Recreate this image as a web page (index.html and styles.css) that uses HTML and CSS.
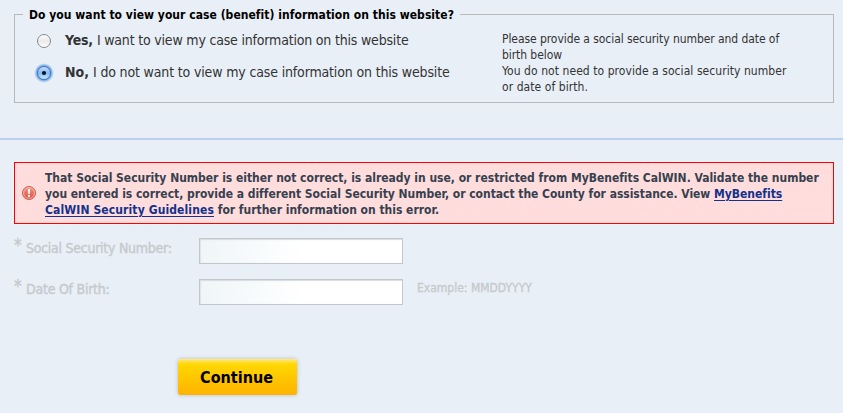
FILE: index.html
```html
<!DOCTYPE html>
<html lang="en">
<head>
<meta charset="utf-8">
<title>MyBenefits CalWIN</title>
<link rel="stylesheet" href="styles.css">
</head>
<body>
<form>
  <fieldset class="choice">
    <legend>Do you want to view your case (benefit) information on this website?</legend>
    <div class="choice-body">
      <div class="options">
        <label class="option">
          <svg class="radio" width="20" height="20" viewBox="0 0 20 20">
            <defs>
              <linearGradient id="plain" x1="0" y1="0" x2="0" y2="1"><stop offset="0" stop-color="#fff"/><stop offset=".5" stop-color="#e9e9e9"/><stop offset="1" stop-color="#fff"/></linearGradient>
            </defs>
            <circle cx="10" cy="10" r="6.5" fill="url(#plain)" stroke="#87898c"/>
          </svg>
          <span class="yes"><b>Yes,</b> <span>I want to view my case information on this website</span></span>
        </label>
        <label class="option">
          <svg class="radio" width="20" height="20" viewBox="0 0 20 20">
            <defs>
              <radialGradient id="halo"><stop offset=".68" stop-color="#4f8fdb" stop-opacity=".9"/><stop offset=".82" stop-color="#71a7e6" stop-opacity=".6"/><stop offset="1" stop-color="#8dbaf0" stop-opacity="0"/></radialGradient>
              <linearGradient id="picked" x1="0" y1="0" x2="0" y2="1"><stop offset="0" stop-color="#cfe2f8"/><stop offset=".5" stop-color="#84b9ef"/><stop offset="1" stop-color="#c9f0ff"/></linearGradient>
            </defs>
            <circle cx="10" cy="10" r="10" fill="url(#halo)"/>
            <circle cx="10" cy="10" r="6.5" fill="url(#picked)" stroke="#4377bd"/>
            <circle cx="10" cy="10" r="2.1" fill="#07142b"/>
          </svg>
          <span class="no"><b>No,</b> <span>I do not want to view my case information on this website</span></span>
        </label>
      </div>
      <div class="hints">
        <p class="hint-a">Please provide a social security number and date of<br>birth below</p>
        <p class="hint-b">You do not need to provide a social security number<br>or date of birth.</p>
      </div>
    </div>
  </fieldset>

  <hr class="divider">

  <div class="alert">
    <svg class="alert-icon" width="14" height="14" viewBox="0 0 14 14">
      <defs><linearGradient id="warn" x1="0" y1="0" x2="0" y2="1"><stop offset="0" stop-color="#f09a88"/><stop offset="1" stop-color="#dc4b3c"/></linearGradient></defs>
      <circle cx="7" cy="7" r="6.5" fill="url(#warn)" stroke="#cf5f52"/>
      <circle cx="7" cy="7" r="5.4" fill="none" stroke="#f7b5a8" stroke-width=".9"/>
      <path d="M5.9 2.9h2.2l-.4 5.1h-1.4z" fill="#fff"/>
      <circle cx="7" cy="10" r="1.15" fill="#fff"/>
    </svg>
    <p>That Social Security Number is either not correct, is already in use, or restricted from MyBenefits CalWIN. Validate the number<br><span class="line-two">you entered is correct, provide a different Social Security Number, or contact the County for assistance. View </span><a href="#">MyBenefits<br><span class="link-tail">CalWIN Security Guidelines</span></a> for further information on this error.</p>
  </div>

  <div class="field">
    <label for="ssn"><sup>*</sup><span class="ssn-label">Social Security Number:</span></label>
    <input id="ssn" type="text">
  </div>
  <div class="field">
    <label for="dob"><sup>*</sup><span class="dob-label">Date Of Birth:</span></label>
    <input id="dob" type="text">
    <span class="example">Example: MMDDYYYY</span>
  </div>

  <button class="continue" type="button">Continue</button>
</form>
</body>
</html>
```

FILE: styles.css
```css
* { box-sizing: border-box; }
body {
  margin: 0;
  height: 413px;
  overflow: hidden;
  background: #e8eff7;
  color: #333;
  font: 12px/16px "DejaVu Sans Condensed", "DejaVu Sans", sans-serif;
}
form { display: flow-root; }
p { margin: 0; white-space: nowrap; }

.choice {
  margin: 5px 9px 0 14px;
  padding: 0;
  height: 98px;
  border: 1px solid #b9b9b9;
}
.choice legend {
  margin-left: 8px;
  padding: 2px 6px 0;
  color: #000;
  font-weight: bold;
  line-height: 17px;
  letter-spacing: .04px;
}
.choice-body { display: flex; padding-top: 7px; }
.options { width: 487px; padding-left: 19px; }
.option {
  display: flex;
  align-items: center;
  height: 20px;
  margin-bottom: 12px;
  font-size: 14px;
  white-space: nowrap;
}
.radio { margin-right: 11px; }
.option > span { display: flex; gap: 4px; line-height: 20px; margin-top: -2px; }
.yes b { letter-spacing: -.2px; }
.yes span { letter-spacing: -.19px; }
.no span { letter-spacing: -.155px; }
.hint-a { letter-spacing: -.07px; }
.hint-b { letter-spacing: .06px; }

.divider { height: 2px; margin: 35px 0 22px; border: 0; background: #bccfec; }

.alert {
  display: flex;
  align-items: center;
  height: 62px;
  margin: 0 9px 14px 14px;
  padding-left: 7px;
  border: 1px solid #f00;
  background: #ffdddc;
  color: #36404f;
  font-weight: bold;
}
.alert-icon { margin-right: 9px; }
.alert p { padding-top: 2px; letter-spacing: -.015px; }
.line-two { letter-spacing: -.028px; }
.alert a { color: #12318c; text-decoration: underline; text-underline-offset: 2px; }
.link-tail { letter-spacing: .118px; }

.field { display: flex; margin: 0 0 15px 14px; height: 26px; }
.field label {
  display: flex;
  width: 185px;
  color: #c6c9cc;
  font-size: 14px;
  line-height: 20px;
  -webkit-text-stroke: .35px #c6c9cc;
}
.field sup { width: 12px; font-size: 17px; line-height: 15px; }
.ssn-label { letter-spacing: -.26px; }
.dob-label { letter-spacing: -.24px; }
.field input {
  width: 204px;
  height: 26px;
  border: 1px solid #c3c7cb;
  border-radius: 0;
  background: linear-gradient(100deg, #eff5f8, #fff 50%);
  box-shadow: inset 0 2px 1px -1px #d9dcde, inset 1px 0 1px #e0e3e5;
}
.example { margin-left: 14px; color: #c6c9cc; line-height: 18px; -webkit-text-stroke: .3px #c6c9cc; }

.continue {
  display: block;
  width: 119px;
  height: 36px;
  margin: 54px 0 0 178px;
  padding: 1px 2px 0 0;
  border: 0;
  border-radius: 2px;
  background: linear-gradient(#ffe98c 0, #ffe14c 2px, #ffd600 6px, #ffbf00 70%, #ffb400);
  box-shadow: 0 0 4px #b4bcc5;
  color: #000;
  font: bold 16px "DejaVu Sans Condensed", "DejaVu Sans", sans-serif;
}
```
